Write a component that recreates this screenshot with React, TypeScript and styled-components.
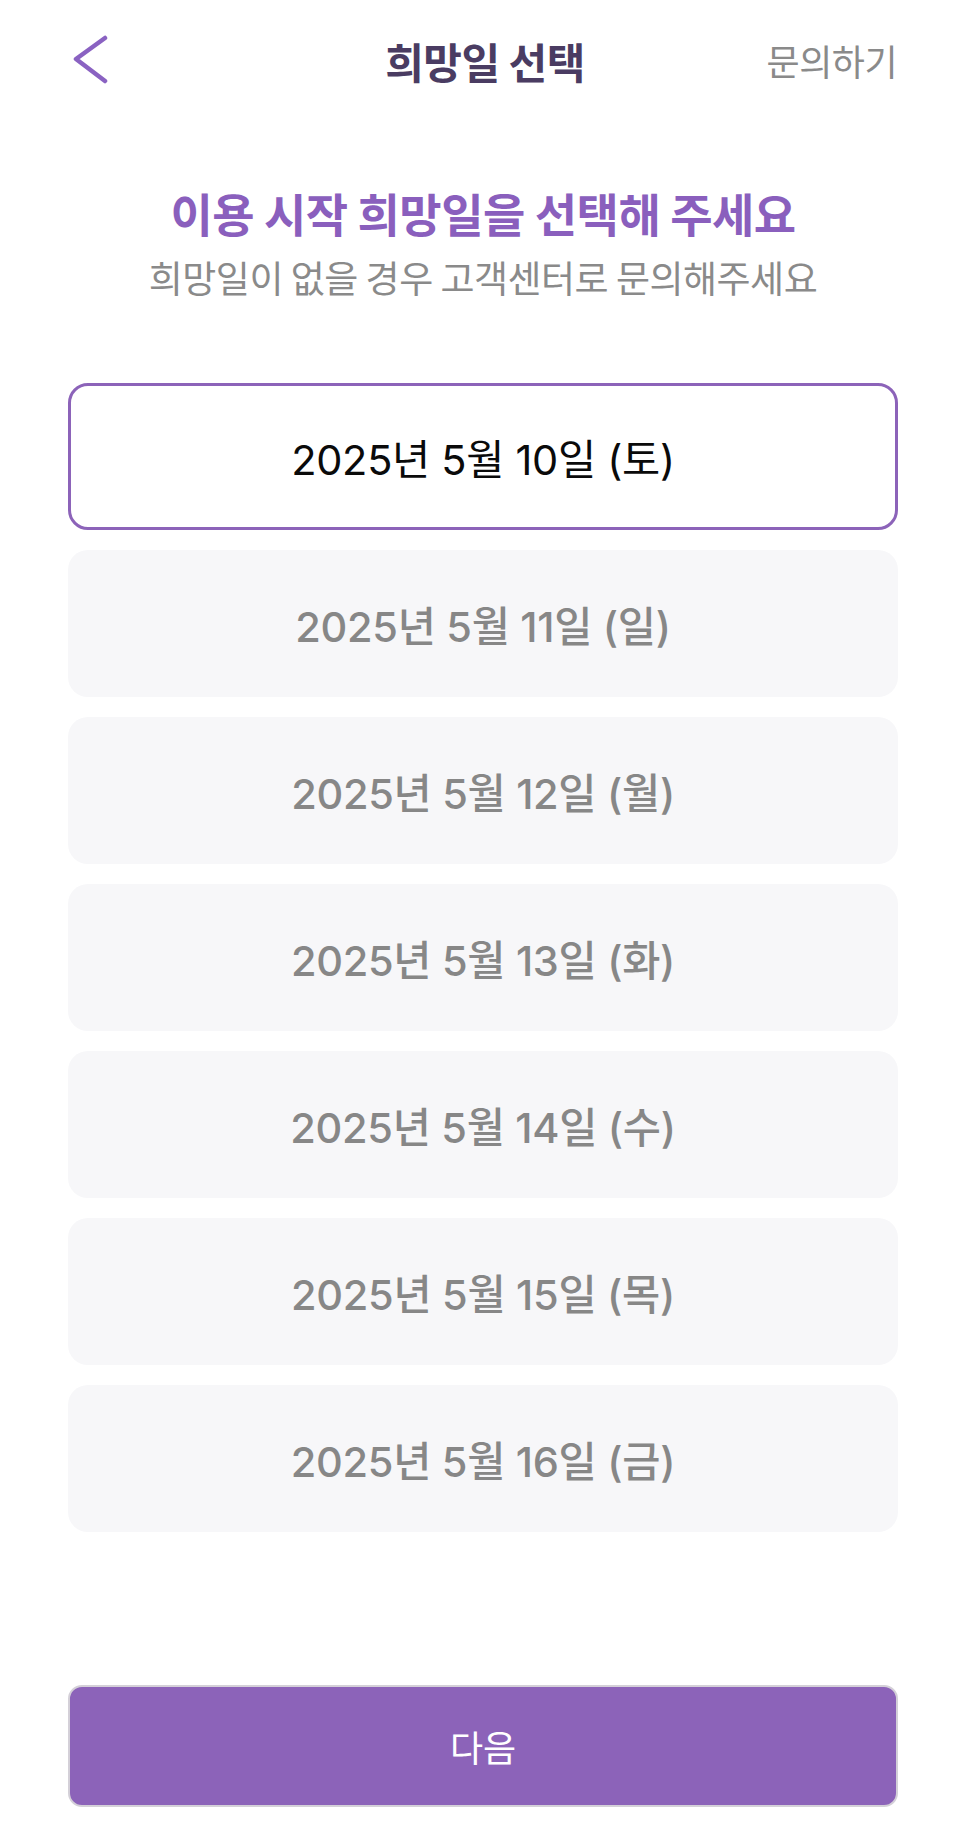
import React, { useState } from "react";
import styled, { createGlobalStyle } from "styled-components";

const GlobalStyle = createGlobalStyle`
  html, body {
    margin: 0;
    padding: 0;
    background: #ffffff;
  }
  body {
    font-family: Inter, "Noto Sans CJK KR", "Noto Sans", sans-serif;
    -webkit-font-smoothing: antialiased;
  }
  * { box-sizing: border-box; }
`;

const Page = styled.div`
  width: 966px;
  min-height: 1841px;
  display: flex;
  flex-direction: column;
  background: #ffffff;
`;

const Header = styled.header`
  height: 120px;
  display: grid;
  grid-template-columns: 1fr auto 1fr;
  align-items: center;
  padding: 0 69px 0 73px;
`;

const BackButton = styled.button`
  justify-self: start;
  display: flex;
  align-items: center;
  padding: 0;
  border: none;
  background: none;
  cursor: pointer;
`;

const Title = styled.h1`
  margin: 0;
  font-family: "Noto Sans CJK KR", sans-serif;
  font-size: 42px;
  font-weight: 700;
  color: #4a3c62;
  letter-spacing: -0.5px;
`;

const InquiryLink = styled.a`
  justify-self: end;
  font-family: "Noto Sans CJK KR", sans-serif;
  font-size: 36px;
  font-weight: 400;
  color: #8a8a8a;
  text-decoration: none;
  letter-spacing: -0.5px;
`;

const Intro = styled.section`
  display: flex;
  flex-direction: column;
  align-items: center;
  margin-top: 62px;
  gap: 12px;
`;

const Heading = styled.h2`
  margin: 0;
  font-family: "Noto Sans CJK KR", sans-serif;
  font-size: 46px;
  line-height: 60px;
  font-weight: 700;
  color: #8a5fbd;
  letter-spacing: -0.5px;
`;

const SubText = styled.p`
  margin: 0;
  font-family: "Noto Sans CJK KR", sans-serif;
  font-size: 37px;
  line-height: 46px;
  font-weight: 400;
  color: #8a8a8a;
  letter-spacing: -0.5px;
`;

const DateList = styled.ul`
  list-style: none;
  margin: 83px 0 0;
  padding: 0 68px;
  display: flex;
  flex-direction: column;
  gap: 20px;
`;

const DateItem = styled.li<{ $selected: boolean }>`
  height: 147px;
  display: flex;
  align-items: center;
  justify-content: center;
  border-radius: 20px;
  border: 3px solid ${(p) => (p.$selected ? "#8c63b9" : "transparent")};
  background: ${(p) => (p.$selected ? "#ffffff" : "#f7f7f9")};
  color: ${(p) => (p.$selected ? "#0a0a0a" : "#878787")};
  font-size: 41.5px;
  font-weight: ${(p) => (p.$selected ? 400 : 500)};
  letter-spacing: -0.3px;
  cursor: pointer;
`;

const Footer = styled.div`
  margin-top: 153px;
  padding: 0 68px;
`;

const NextButton = styled.button`
  width: 100%;
  height: 122px;
  border: 2px solid #d4d0d8;
  border-radius: 14px;
  background: #8c63b9;
  color: #ffffff;
  font-family: "Noto Sans CJK KR", sans-serif;
  font-size: 36px;
  font-weight: 400;
  cursor: pointer;
`;

const dates = [
  "2025년 5월 10일 (토)",
  "2025년 5월 11일 (일)",
  "2025년 5월 12일 (월)",
  "2025년 5월 13일 (화)",
  "2025년 5월 14일 (수)",
  "2025년 5월 15일 (목)",
  "2025년 5월 16일 (금)",
];

export default function App() {
  const [selected, setSelected] = useState(0);
  return (
    <>
      <GlobalStyle />
      <Page>
        <Header>
          <BackButton aria-label="뒤로">
            <svg width="36" height="50" viewBox="0 0 36 50" fill="none">
              <path
                d="M32 3 L3 24 L32 46"
                stroke="#8a62c2"
                strokeWidth="4.5"
                strokeLinecap="round"
                strokeLinejoin="round"
              />
            </svg>
          </BackButton>
          <Title>희망일 선택</Title>
          <InquiryLink href="#">문의하기</InquiryLink>
        </Header>
        <Intro>
          <Heading>이용 시작 희망일을 선택해 주세요</Heading>
          <SubText>희망일이 없을 경우 고객센터로 문의해주세요</SubText>
        </Intro>
        <DateList>
          {dates.map((d, i) => (
            <DateItem key={d} $selected={i === selected} onClick={() => setSelected(i)}>
              {d}
            </DateItem>
          ))}
        </DateList>
        <Footer>
          <NextButton>다음</NextButton>
        </Footer>
      </Page>
    </>
  );
}
